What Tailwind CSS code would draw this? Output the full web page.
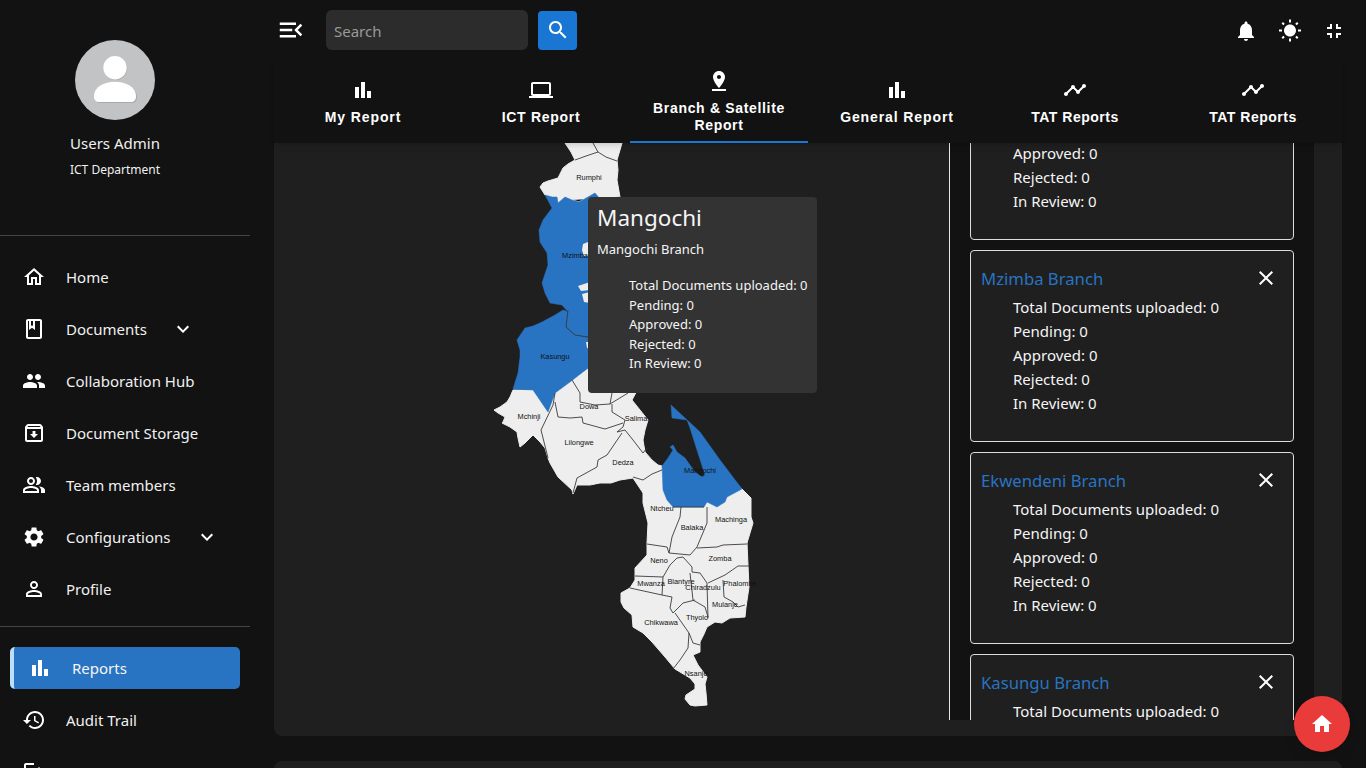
<!DOCTYPE html>
<html lang="en">
<head>
<meta charset="utf-8">
<title>Reports</title>
<script src="https://cdn.jsdelivr.net/npm/@tailwindcss/browser@4"></script>
</head>
<body class="bg-[#121212] text-white font-['Noto_Sans',sans-serif] h-screen overflow-hidden">
<div class="flex h-[768px] overflow-hidden">
  <!-- Sidebar -->
  <aside class="w-[250px] shrink-0 h-[768px] overflow-hidden bg-[#121212]">
    <div class="h-[235px] w-[230px] pt-10 flex flex-col items-center">
      <div class="w-20 h-20 rounded-full bg-[#c2c3c5] flex items-center justify-center">
        <svg class="w-20 h-20" viewBox="0 0 80 80"><path d="M19 56c0-9 10-14.300 21-14.300S61 47 61 56c0 4-2 6-5 6H24c-3 0-5-2-5-6z" fill="#a9aaac" transform="translate(1 1)"/><circle cx="40.500" cy="28.500" r="11.700" fill="#a9aaac"/><circle cx="40" cy="27.700" r="11.700" fill="#fff"/><path d="M19 56c0-9 10-14.300 21-14.300S61 47 61 56c0 4-2 6-5 6H24c-3 0-5-2-5-6z" fill="#fff"/></svg>
      </div>
      <div class="text-[15px] leading-5 mt-[13px] text-[#f0f0f0]">Users Admin</div>
      <div class="text-[12px] leading-4 mt-[9px] text-[#f0f0f0]">ICT Department</div>
    </div>
    <div class="border-t border-[#444] h-[16px]"></div>
    <nav class="text-[15px] text-[#f0f0f0]">
      <a class="h-[52px] flex items-center pl-[22px]"><svg class="w-6 h-6 fill-white mr-5" viewBox="0 0 24 24"><path d="M12 5.690l5 4.500V18h-2v-6H9v6H7v-7.810l5-4.500M12 3L2 12h3v8h6v-6h2v6h6v-8h3L12 3z"/></svg>Home</a>
      <a class="h-[52px] flex items-center pl-[22px]"><svg class="w-6 h-6 fill-white mr-5" viewBox="0 0 24 24"><path d="M18 2H6c-1.100 0-2 .9-2 2v16c0 1.100.9 2 2 2h12c1.100 0 2-.9 2-2V4c0-1.100-.9-2-2-2zM9 4h2v5l-1-.75L9 9V4zm9 16H6V4h1v9l3-2.250L13 13V4h5v16z"/></svg>Documents<svg class="w-6 h-6 fill-white ml-6" viewBox="0 0 24 24"><path d="M16.590 8.590L12 13.170 7.410 8.590 6 10l6 6 6-6z"/></svg></a>
      <a class="h-[52px] flex items-center pl-[22px]"><svg class="w-6 h-6 fill-white mr-5" viewBox="0 0 24 24"><path d="M16 11c1.660 0 2.990-1.340 2.990-3S17.660 5 16 5c-1.660 0-3 1.340-3 3s1.340 3 3 3zm-8 0c1.660 0 2.990-1.340 2.990-3S9.660 5 8 5C6.340 5 5 6.340 5 8s1.340 3 3 3zm0 2c-2.330 0-7 1.170-7 3.500V19h14v-2.500c0-2.330-4.670-3.500-7-3.500zm8 0c-.29 0-.62.02-.97.05 1.160.84 1.970 1.970 1.970 3.450V19h6v-2.500c0-2.330-4.670-3.500-7-3.500z"/></svg>Collaboration Hub</a>
      <a class="h-[52px] flex items-center pl-[22px]"><svg class="w-6 h-6 fill-white mr-5" viewBox="0 0 24 24"><path d="M20.540 5.230l-1.390-1.680C18.880 3.210 18.470 3 18 3H6c-.47 0-.88.21-1.160.55L3.460 5.230C3.170 5.570 3 6.020 3 6.500V19c0 1.100.9 2 2 2h14c1.100 0 2-.9 2-2V6.500c0-.48-.17-.93-.46-1.270zM6.240 5h11.520l.81.97H5.440l.8-.97zM5 19V8h14v11H5zm8.450-9h-2.900v3H8l4 4 4-4h-2.550z"/></svg>Document Storage</a>
      <a class="h-[52px] flex items-center pl-[22px]"><svg class="w-6 h-6 fill-white mr-5" viewBox="0 0 24 24"><path d="M16.670 13.130C18.040 14.060 19 15.320 19 17v3h4v-3c0-2.180-3.570-3.470-6.330-3.870zM15 12c2.210 0 4-1.790 4-4s-1.790-4-4-4c-.47 0-.91.1-1.330.24C14.500 5.270 15 6.580 15 8s-.5 2.730-1.330 3.760c.42.14.86.24 1.330.24zM9 12c2.210 0 4-1.790 4-4s-1.790-4-4-4-4 1.790-4 4 1.790 4 4 4zm0-6c1.100 0 2 .9 2 2s-.9 2-2 2-2-.9-2-2 .9-2 2-2zM9 13c-2.670 0-8 1.340-8 4v3h16v-3c0-2.660-5.330-4-8-4zm6 5H3v-.99C3.200 16.290 6.300 15 9 15s5.800 1.290 6 2v1z"/></svg>Team members</a>
      <a class="h-[52px] flex items-center pl-[22px]"><svg class="w-6 h-6 fill-white mr-5" viewBox="0 0 24 24"><path d="M19.140 12.940c.04-.3.06-.61.06-.94 0-.32-.02-.64-.07-.94l2.030-1.580c.18-.14.23-.41.12-.61l-1.920-3.320c-.12-.22-.37-.29-.59-.22l-2.390.96c-.5-.38-1.030-.7-1.620-.94l-.36-2.540c-.04-.24-.24-.41-.48-.41h-3.840c-.24 0-.43.17-.47.41l-.36 2.540c-.59.24-1.130.57-1.620.94l-2.390-.96c-.22-.08-.47 0-.59.22L2.740 8.870c-.12.21-.08.47.12.61l2.030 1.580c-.05.3-.09.63-.09.94s.02.64.07.94l-2.030 1.580c-.18.14-.23.41-.12.61l1.920 3.320c.12.22.37.29.59.22l2.390-.96c.5.38 1.030.7 1.620.94l.36 2.540c.05.24.24.41.48.41h3.840c.24 0 .44-.17.47-.41l.36-2.540c.59-.24 1.130-.56 1.620-.94l2.390.96c.22.08.47 0 .59-.22l1.920-3.320c.12-.22.07-.47-.12-.61l-2.010-1.580zM12 15.600c-1.980 0-3.600-1.620-3.600-3.600s1.620-3.600 3.600-3.600 3.600 1.620 3.600 3.600-1.620 3.600-3.600 3.600z"/></svg>Configurations<svg class="w-6 h-6 fill-white ml-[25px]" viewBox="0 0 24 24"><path d="M16.590 8.590L12 13.170 7.410 8.590 6 10l6 6 6-6z"/></svg></a>
      <a class="h-[52px] flex items-center pl-[22px]"><svg class="w-6 h-6 fill-white mr-5" viewBox="0 0 24 24"><path d="M12 5.900c1.160 0 2.100.94 2.100 2.100s-.94 2.100-2.100 2.100S9.900 9.160 9.900 8s.94-2.100 2.100-2.100m0 9c2.970 0 6.100 1.460 6.100 2.100v1.100H5.900V17c0-.64 3.130-2.100 6.100-2.100M12 4C9.790 4 8 5.790 8 8s1.790 4 4 4 4-1.790 4-4-1.790-4-4-4zm0 9c-2.670 0-8 1.340-8 4v3h16v-3c0-2.660-5.330-4-8-4z"/></svg>Profile</a>
      <div class="border-t border-[#444] mt-[11px] h-[21px]"></div>
      <a class="h-[42px] mx-[10px] flex items-center pl-[14px] bg-[#2874c2] rounded-[5px] border-l-4 border-[#bbdefb] text-[#f5f5f5]"><svg class="w-6 h-6 fill-white mr-5" viewBox="0 0 24 24"><path d="M4 9h4v11H4zm12 4h4v7h-4zm-6-9h4v16h-4z"/></svg>Reports</a>
      <a class="h-[52px] mt-[5px] flex items-center pl-[22px]"><svg class="w-6 h-6 fill-white mr-5" viewBox="0 0 24 24"><path d="M13 3c-4.970 0-9 4.030-9 9H1l3.890 3.890.07.14L9 12H6c0-3.870 3.130-7 7-7s7 3.130 7 7-3.130 7-7 7c-1.930 0-3.680-.79-4.940-2.060l-1.420 1.420C8.270 19.990 10.510 21 13 21c4.970 0 9-4.030 9-9s-4.030-9-9-9zm-1 5v5l4.280 2.540.72-1.210-3.500-2.080V8H12z"/></svg>Audit Trail</a>
      <a class="h-[52px] flex items-center pl-[22px]"><svg class="w-6 h-6 fill-white mr-5" viewBox="0 0 24 24"><path d="M17 7l-1.410 1.410L18.170 11H8v2h10.170l-2.580 2.580L17 17l5-5zM4 5h8V3H4c-1.100 0-2 .9-2 2v14c0 1.100.9 2 2 2h8v-2H4V5z"/></svg>Logout</a>
    </nav>
  </aside>

  <!-- Main column -->
  <div class="flex-1 min-w-0 h-[768px] overflow-hidden">
    <header class="h-[60px] flex items-center pl-[26px] pr-5">
      <svg class="w-[30px] h-[30px] fill-white" viewBox="0 0 24 24"><path d="M3 18h13v-2H3v2zm0-5h10v-2H3v2zm0-7v2h13V6H3zm18 9.590L17.420 12 21 8.410 19.590 7l-5 5 5 5L21 15.590z"/></svg>
      <div class="ml-5 w-[202px] h-10 bg-[#2c2c2c] rounded-md flex items-center pl-2 pt-[2px] text-[15px] text-[#9a9a9a]">Search</div>
      <button class="ml-[10px] w-[39px] h-[39px] bg-[#1976d2] rounded flex items-center justify-center"><svg class="w-6 h-6 fill-white" viewBox="0 0 24 24"><path d="M15.500 14h-.79l-.28-.27C15.410 12.590 16 11.110 16 9.500 16 5.910 13.090 3 9.500 3S3 5.910 3 9.500 5.910 16 9.500 16c1.610 0 3.090-.59 4.230-1.570l.27.28v.79l5 4.990L20.490 19l-4.990-5zm-6 0C7.010 14 5 11.990 5 9.500S7.010 5 9.500 5 14 7.010 14 9.500 11.990 14 9.500 14z"/></svg></button>
      <div class="ml-auto flex gap-5 mt-[2px]">
        <svg class="w-6 h-6 fill-white" viewBox="0 0 24 24"><path d="M12 22c1.100 0 2-.9 2-2h-4c0 1.100.89 2 2 2zm6-6v-5c0-3.070-1.640-5.640-4.500-6.320V4c0-.83-.67-1.500-1.500-1.500s-1.500.67-1.500 1.500v.68C7.630 5.360 6 7.920 6 11v5l-2 2v1h16v-1l-2-2z"/></svg>
        <svg class="w-6 h-6 fill-white" viewBox="0 0 24 24"><path d="M6.760 4.840l-1.800-1.790-1.410 1.410 1.790 1.790 1.420-1.410zM4 10.500H1v2h3v-2zm9-9.950h-2V3.500h2V.55zm7.450 3.910l-1.410-1.410-1.790 1.790 1.410 1.410 1.790-1.790zm-3.210 13.700l1.790 1.800 1.410-1.410-1.800-1.790-1.400 1.400zM20 10.500v2h3v-2h-3zm-8-5c-3.310 0-6 2.690-6 6s2.690 6 6 6 6-2.690 6-6-2.690-6-6-6zm-1 16.950h2V19.500h-2v2.950zm-7.450-3.910l1.410 1.410 1.790-1.800-1.410-1.410-1.790 1.800z"/></svg>
        <svg class="w-6 h-6 fill-white" viewBox="0 0 24 24"><path d="M5 16h3v3h2v-5H5v2zm3-8H5v2h5V5H8v3zm6 11h2v-3h3v-2h-5v5zm2-11V5h-2v5h5V8h-3z"/></svg>
      </div>
    </header>

    <!-- Paper -->
    <div class="ml-6 w-[1068px] h-[676px] bg-[#1f1f1f] rounded-lg relative">
      <div class="h-[83px] grid grid-cols-6 bg-[#121212] rounded-t shadow-md relative z-10 font-['Liberation_Sans',sans-serif] font-bold text-[14px] leading-[17px] text-center">
        <div class="flex flex-col items-center justify-center gap-[7px] tracking-[0.9px]"><svg class="w-6 h-6 fill-white" viewBox="0 0 24 24"><path d="M4 9h4v11H4zm12 4h4v7h-4zm-6-9h4v16h-4z"/></svg>My Report</div>
        <div class="flex flex-col items-center justify-center gap-[7px] tracking-[0.7px]"><svg class="w-6 h-6 fill-white" viewBox="0 0 24 24"><path d="M20 18c1.100 0 1.990-.9 1.990-2L22 6c0-1.100-.9-2-2-2H4c-1.100 0-2 .9-2 2v10c0 1.100.9 2 2 2H0v2h24v-2h-4zM4 6h16v10H4V6z"/></svg>ICT Report</div>
        <div class="flex flex-col items-center justify-center gap-[7px] pt-[1px] border-b-2 border-[#1976d2] tracking-[0.67px]"><svg class="w-6 h-6 fill-white" viewBox="0 0 24 24"><path d="M18 8c0-3.310-2.690-6-6-6S6 4.690 6 8c0 4.500 6 11 6 11s6-6.500 6-11zm-8 0c0-1.100.9-2 2-2s2 .9 2 2-.89 2-2 2c-1.100 0-2-.9-2-2zM5 20v2h14v-2H5z"/></svg><span>Branch &amp; Satellite<br>Report</span></div>
        <div class="flex flex-col items-center justify-center gap-[7px] tracking-[0.9px]"><svg class="w-6 h-6 fill-white" viewBox="0 0 24 24"><path d="M4 9h4v11H4zm12 4h4v7h-4zm-6-9h4v16h-4z"/></svg>General Report</div>
        <div class="flex flex-col items-center justify-center gap-[7px] tracking-[0.5px]"><svg class="w-6 h-6 fill-white" viewBox="0 0 24 24"><path d="M23 8c0 1.100-.9 2-2 2-.18 0-.35-.02-.51-.07l-3.560 3.550c.05.16.07.34.07.52 0 1.100-.9 2-2 2s-2-.9-2-2c0-.18.02-.36.07-.52l-2.550-2.550c-.16.05-.34.07-.52.07s-.36-.02-.52-.07l-4.550 4.560c.05.16.07.33.07.51 0 1.100-.9 2-2 2s-2-.9-2-2 .9-2 2-2c.18 0 .35.02.51.07l4.560-4.550C8.020 9.360 8 9.180 8 9c0-1.100.9-2 2-2s2 .9 2 2c0 .18-.02.36-.07.52l2.550 2.550c.16-.05.34-.07.52-.07s.36.02.52.07l3.550-3.560C19.020 8.350 19 8.180 19 8c0-1.100.9-2 2-2s2 .9 2 2z"/></svg>TAT Reports</div>
        <div class="flex flex-col items-center justify-center gap-[7px] tracking-[0.5px]"><svg class="w-6 h-6 fill-white" viewBox="0 0 24 24"><path d="M23 8c0 1.100-.9 2-2 2-.18 0-.35-.02-.51-.07l-3.560 3.550c.05.16.07.34.07.52 0 1.100-.9 2-2 2s-2-.9-2-2c0-.18.02-.36.07-.52l-2.550-2.550c-.16.05-.34.07-.52.07s-.36-.02-.52-.07l-4.550 4.560c.05.16.07.33.07.51 0 1.100-.9 2-2 2s-2-.9-2-2 .9-2 2-2c.18 0 .35.02.51.07l4.560-4.550C8.020 9.360 8 9.180 8 9c0-1.100.9-2 2-2s2 .9 2 2c0 .18-.02.36-.07.52l2.550 2.550c.16-.05.34-.07.52-.07s.36.02.52.07l3.550-3.560C19.020 8.350 19 8.180 19 8c0-1.100.9-2 2-2s2 .9 2 2z"/></svg>TAT Reports</div>
      </div>

      <div class="flex h-[577px] w-[1040px]">
        <!-- Map -->
        <div class="relative w-[675px] shrink-0 h-[577px] overflow-hidden">
          <svg class="block" width="675" height="577" viewBox="274 143 675 577">
            <g fill="#eeeeee" stroke="#eeeeee" stroke-width="1" stroke-linejoin="round">
              <path d="M565 143L571 152 575 160 568 164 563 168 560 174 558 178 548 181 543 183 540 187 545 195 552 197 557 197 558 203 565 197 572 200 579 202 588 197 595 193 600 199 620 197 620 300 600 300 560 200 620 197 617 180 618 170 617 160 620 150 622 143Z"/>
              <path d="M572 380L600 360 640 385 632 400 640 410 648 420 645 430 643 440 645 452 652 460 658 465 662 466 670 480 730 480 742 489 751 498 751 517 753 523 750 533 747 543 748 565 749 587 746 607 745 617 730 618 722 623 715 622 707 627 704 634 700 642 700 652 693 655 698 665 707 677 705 684 706 693 707 705 695 706 690 705 685 699 686 695 695 689 695 684 690 678 675 669 665 657 652 642 643 633 633 627 632 615 624 608 621 602 621 593 630 588 635 580 635 568 647 555 647 543 648 523 643 503 643 493 633 478 620 480 611 483 600 483 590 485 577 485 573 494 572 490 558 477 550 463 548 458 545 448 540 442 533 435 525 443 520 447 518 438 517 432 510 427 502 423 503 422 505 417 498 413 494 410 500 407 507 402 510 397 513 390 533 390 548 412 555 393Z"/>
            </g>
            <g fill="#2874c2" stroke="#2874c2" stroke-width=".5" stroke-linejoin="round">
              <path d="M545 195L552 197 557 197 558 203 565 197 572 200 579 202 588 197 595 193 600 199 620 197 620 337 588 337 575 335 566 327 568 312 562 305 550 303 545 293 542 283 545 274 548 265 547 253 540 242 539 230 543 220 549 212 552 208Z"/>
              <path d="M563 310L555 315 542 322 533 326 525 328 517 340 520 350 520 357 518 373 513 389 533 390 548 412 555 393 570 382 588 368 600 360 600 340 575 335 566 327 568 312Z"/>
              <path d="M662 466L668 458 673 450 670 447 673 445 677 452 685 458 690 465 695 472 702 477 705 475 697 450 690 428 687 420 672 418 671 405 685 418 700 432 720 460 742 489 727 497 725 502 717 507 707 502 704 507 673 507 667 500 663 490Z"/>
            </g>
            <g fill="#eeeeee">
              <path d="M583 244L588 242 590 256 584 256 582 250ZM578 286L590 282 590 290 581 291ZM582 294L590 292 590 303 584 302ZM586 342L590 342 590 349 587 348Z"/>
            </g>
            <g fill="none" stroke="#3a3a3a" stroke-width=".9" stroke-linejoin="round">
              <path d="M593 143L598 152 586 156 575 160M598 152L606 157 617 161"/>
              <path d="M568 310L566 327 575 335 588 337 600 338"/>
              <path d="M572 380L580 393 580 402 595 405 610 404 612 393M610 404L628 393M612 404L612 412 625 420 623 427 617 432 625 430 633 440 643 453 647 448"/>
              <path d="M555 393L553 405 541 430 548 458"/>
              <path d="M555 402L558 417 570 418 582 417 583 423 605 429 623 423"/>
              <path d="M622 433L607 455 598 460 597 467 577 478 573 493"/>
              <path d="M633 477L643 480 652 474 662 470"/>
              <path d="M681 507L680 517 672 537 669 553"/>
              <path d="M647 544L667 547 669 553 690 555"/>
              <path d="M707 507L707 523 697 547 690 555"/>
              <path d="M697 548L717 547 723 545 747 544"/>
              <path d="M635 576L663 577 670 565 677 558 683 557 692 567 692 572 700 573 707 583 708 618"/>
              <path d="M663 577L662 595M630 588L662 595 672 597 670 608 673 613 683 603 695 600"/>
              <path d="M690 573L693 600 705 607 708 617"/>
              <path d="M675 613L689 633 688 648 680 660 673 669"/>
              <path d="M689 633L693 643 700 645"/>
              <path d="M749 566L738 566 725 575 708 583"/>
              <path d="M723 580L724 597 733 602 738 607 745 605"/>
              <path d="M673 507L704 507"/>
            </g>
            <g font-family="'Liberation Sans',sans-serif" font-size="7.400" fill="#111" text-anchor="middle">
              <text x="589" y="180">Rumphi</text>
              <text x="575" y="258">Mzimba</text>
              <text x="555" y="359">Kasungu</text>
              <text x="529" y="419">Mchinji</text>
              <text x="589" y="409">Dowa</text>
              <text x="636" y="421">Salima</text>
              <text x="579" y="445">Lilongwe</text>
              <text x="623" y="465">Dedza</text>
              <text x="700" y="473">Mangochi</text>
              <text x="662" y="511">Ntcheu</text>
              <text x="692" y="530">Balaka</text>
              <text x="731" y="522">Machinga</text>
              <text x="659" y="563">Neno</text>
              <text x="651" y="586">Mwanza</text>
              <text x="681" y="584">Blantyre</text>
              <text x="703" y="590">Chiradzulu</text>
              <text x="720" y="561">Zomba</text>
              <text x="740" y="586">Phalombe</text>
              <text x="725" y="607">Mulanje</text>
              <text x="697" y="620">Thyolo</text>
              <text x="661" y="625">Chikwawa</text>
              <text x="696" y="676">Nsanje</text>
            </g>
          </svg>
          <!-- Tooltip -->
          <div class="absolute left-[314px] top-[54px] w-[229px] h-[196px] bg-[#333333] rounded pl-[9px] pt-[5px] text-[#f5f5f5]">
            <div class="text-[22.500px] leading-8">Mangochi</div>
            <div class="text-[13px] leading-5 mt-[5px]">Mangochi Branch</div>
            <ul class="mt-[17px] pl-8 text-[13px] leading-[19.600px] whitespace-nowrap">
              <li>Total Documents uploaded: 0</li>
              <li>Pending: 0</li>
              <li>Approved: 0</li>
              <li>Rejected: 0</li>
              <li>In Review: 0</li>
            </ul>
          </div>
        </div>

        <!-- Branch list -->
        <div class="w-[365px] h-[577px] border-l border-[#e8e8e8] bg-[#121212] overflow-hidden px-5 flex flex-col gap-[10px]">
          <div class="h-[192px] shrink-0 -mt-[95px] bg-[#1f1f1f] border border-[#ddd] rounded pl-[10px] pt-[15px] pr-4">
            <div class="flex items-center justify-between h-[24px] text-[16.700px] text-[#2874c2]"><span class="mt-[2px]">Rumphi Branch</span><svg class="w-6 h-6 fill-white -mr-[1px]" viewBox="0 0 24 24"><path d="M19 6.410L17.590 5 12 10.590 6.410 5 5 6.410 10.590 12 5 17.590 6.410 19 12 13.410 17.590 19 19 17.590 13.410 12z"/></svg></div>
            <ul class="pl-8 mt-[5px] text-[15px] leading-6 text-[#f5f5f5]"><li>Total Documents uploaded: 0</li><li>Pending: 0</li><li>Approved: 0</li><li>Rejected: 0</li><li>In Review: 0</li></ul>
          </div>
          <div class="h-[192px] shrink-0 bg-[#1f1f1f] border border-[#ddd] rounded pl-[10px] pt-[15px] pr-4">
            <div class="flex items-center justify-between h-[24px] text-[16.700px] text-[#2874c2]"><span class="mt-[2px]">Mzimba Branch</span><svg class="w-6 h-6 fill-white -mr-[1px]" viewBox="0 0 24 24"><path d="M19 6.410L17.590 5 12 10.590 6.410 5 5 6.410 10.590 12 5 17.590 6.410 19 12 13.410 17.590 19 19 17.590 13.410 12z"/></svg></div>
            <ul class="pl-8 mt-[5px] text-[15px] leading-6 text-[#f5f5f5]"><li>Total Documents uploaded: 0</li><li>Pending: 0</li><li>Approved: 0</li><li>Rejected: 0</li><li>In Review: 0</li></ul>
          </div>
          <div class="h-[192px] shrink-0 bg-[#1f1f1f] border border-[#ddd] rounded pl-[10px] pt-[15px] pr-4">
            <div class="flex items-center justify-between h-[24px] text-[16.700px] text-[#2874c2]"><span class="mt-[2px]">Ekwendeni Branch</span><svg class="w-6 h-6 fill-white -mr-[1px]" viewBox="0 0 24 24"><path d="M19 6.410L17.590 5 12 10.590 6.410 5 5 6.410 10.590 12 5 17.590 6.410 19 12 13.410 17.590 19 19 17.590 13.410 12z"/></svg></div>
            <ul class="pl-8 mt-[5px] text-[15px] leading-6 text-[#f5f5f5]"><li>Total Documents uploaded: 0</li><li>Pending: 0</li><li>Approved: 0</li><li>Rejected: 0</li><li>In Review: 0</li></ul>
          </div>
          <div class="h-[192px] shrink-0 bg-[#1f1f1f] border border-[#ddd] rounded pl-[10px] pt-[15px] pr-4">
            <div class="flex items-center justify-between h-[24px] text-[16.700px] text-[#2874c2]"><span class="mt-[2px]">Kasungu Branch</span><svg class="w-6 h-6 fill-white -mr-[1px]" viewBox="0 0 24 24"><path d="M19 6.410L17.590 5 12 10.590 6.410 5 5 6.410 10.590 12 5 17.590 6.410 19 12 13.410 17.590 19 19 17.590 13.410 12z"/></svg></div>
            <ul class="pl-8 mt-[5px] text-[15px] leading-6 text-[#f5f5f5]"><li>Total Documents uploaded: 0</li><li>Pending: 0</li><li>Approved: 0</li><li>Rejected: 0</li><li>In Review: 0</li></ul>
          </div>
        </div>
      </div>
    </div>
    <!-- Next paper peeking at the bottom -->
    <div class="ml-6 w-[1068px] h-10 mt-[25px] bg-[#1f1f1f] rounded-lg"></div>
  </div>
</div>
<!-- Floating home button -->
<button class="fixed left-[1294px] top-[696px] w-14 h-14 rounded-full bg-[#ea3b3b] flex items-center justify-center shadow-lg"><svg class="w-6 h-6 fill-white" viewBox="0 0 24 24"><path d="M10 20v-6h4v6h5v-8h3L12 3 2 12h3v8z"/></svg></button>
</body>
</html>
